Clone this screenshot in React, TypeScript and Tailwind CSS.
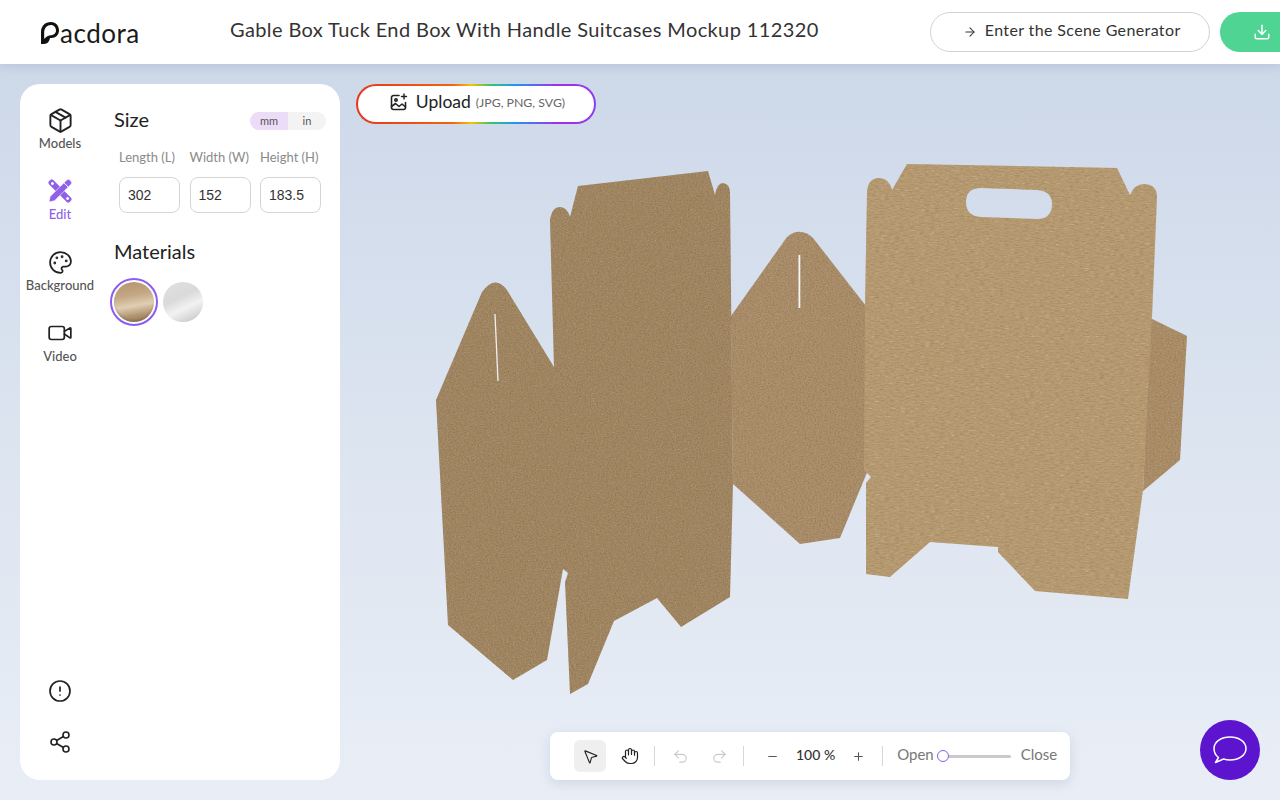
import {
  ArrowRight,
  CircleAlert,
  Download,
  Hand,
  MousePointer2,
  Minus,
  Package,
  Palette,
  Plus,
  Redo2,
  Share2,
  Undo2,
  Video,
} from 'lucide-react';

const uiFont = "font-['Lato',sans-serif]";

function EditIcon() {
  return (
    <svg width="24" height="24" viewBox="0 0 24 24" fill="#9061e8">
      {/* ruler, hollow ends */}
      <path
        fillRule="evenodd"
        d="M5.5 1.2L22.8 18.5a2.4 2.4 0 0 1 0 3.4l-.9.9a2.4 2.4 0 0 1-3.4 0L1.2 5.5a2.4 2.4 0 0 1 0-3.4l.9-.9a2.4 2.4 0 0 1 3.4 0ZM3.4 3.4a1.4 1.4 0 1 0 2 2 1.4 1.4 0 0 0-2-2ZM18.6 18.6a1.4 1.4 0 1 0 2 2 1.4 1.4 0 0 0-2-2Z"
      />
      {/* pencil */}
      <path d="M18.5 1.2a2.6 2.6 0 0 1 3.6 0l.7.7a2.6 2.6 0 0 1 0 3.6L6.5 21.8 1 23l1.2-5.5Z" stroke="#fff" strokeWidth="0.6" />
      <path d="M16 3.8l4.2 4.2" stroke="#fff" strokeWidth="1" />
    </svg>
  );
}

function UploadIcon() {
  return (
    <svg width="18" height="18" viewBox="0 0 18 18" fill="none" stroke="#222" strokeWidth="1.6" strokeLinecap="round" strokeLinejoin="round">
      <path d="M9 2.5H3.5a2 2 0 0 0-2 2v10a2 2 0 0 0 2 2h10a2 2 0 0 0 2-2V9.5" />
      <circle cx="6" cy="7" r="1.2" />
      <path d="M1.5 13.5l4-3 3.5 3 3-2.5 3.5 3" />
      <path d="M14 1v5M11.5 3.5h5" strokeWidth="1.4" />
    </svg>
  );
}

function NavItem({ icon, label, active }: { icon: React.ReactNode; label: string; active?: boolean }) {
  return (
    <div className="flex h-[71px] w-20 flex-col items-center pt-[24px]">
      <div className="flex h-6 items-center justify-center text-[#222]">{icon}</div>
      <span className={`mt-[4px] text-[13px] leading-[14px] font-medium ${active ? 'text-[#9061e8]' : 'text-[#555]'}`}>{label}</span>
    </div>
  );
}

function SizeField({ label, value }: { label: string; value: string }) {
  return (
    <div className="flex w-[61px] flex-col">
      <span className="text-[13px] leading-[16px] whitespace-nowrap text-[#8a8a8a]">{label}</span>
      <input
        readOnly
        value={value}
        className="mt-3 h-9 w-full rounded-lg border border-[#d5d5d5] bg-white pl-2 font-['Liberation_Sans',sans-serif] text-[14px] text-[#333] outline-none"
      />
    </div>
  );
}

function BoxNet() {
  return (
    <svg className="absolute inset-0 h-full w-full" viewBox="0 64 1280 736">
      <defs>
        <filter id="kraft" x="0" y="0" width="100%" height="100%" colorInterpolationFilters="sRGB">
          <feTurbulence type="fractalNoise" baseFrequency="0.6 0.75" numOctaves="3" seed="4" result="n" />
          <feColorMatrix in="n" type="matrix" values="0 0 0 0 0.4  0 0 0 0 0.3  0 0 0 0 0.2  0.7 0 0 0 -0.3" result="d" />
          <feColorMatrix in="n" type="matrix" values="0 0 0 0 0.85  0 0 0 0 0.76  0 0 0 0 0.62  0 0.9 0 0 -0.5" result="l" />
          <feMerge result="m">
            <feMergeNode in="d" />
            <feMergeNode in="l" />
          </feMerge>
          <feComposite in="m" in2="SourceGraphic" operator="in" result="mm" />
          <feMerge>
            <feMergeNode in="SourceGraphic" />
            <feMergeNode in="mm" />
          </feMerge>
        </filter>
        <filter id="kraftFibre" x="0" y="0" width="100%" height="100%" colorInterpolationFilters="sRGB">
          <feTurbulence type="fractalNoise" baseFrequency="0.2 0.85" numOctaves="3" seed="9" result="n" />
          <feColorMatrix in="n" type="matrix" values="0 0 0 0 0.45  0 0 0 0 0.34  0 0 0 0 0.2  0.6 0 0 0 -0.26" result="d" />
          <feColorMatrix in="n" type="matrix" values="0 0 0 0 0.88  0 0 0 0 0.84  0 0 0 0 0.74  0 1.2 0 0 -0.7" result="l" />
          <feMerge result="m">
            <feMergeNode in="d" />
            <feMergeNode in="l" />
          </feMerge>
          <feComposite in="m" in2="SourceGraphic" operator="in" result="mm" />
          <feMerge>
            <feMergeNode in="SourceGraphic" />
            <feMergeNode in="mm" />
          </feMerge>
        </filter>
      </defs>

      {/* side flap */}
      <path filter="url(#kraft)" fill="#ac8f69" d="M1150 318L1187 336L1180 460L1143 491Z" />

      {/* middle panel */}
      <path
        filter="url(#kraft)"
        fill="#ab8e6a"
        d="M731 316L787 237Q800 226 813 238L866 306L868 470L840 538L800 544L733 484Z"
      />
      <path fill="#f4f6fa" d="M798.5 255h1.8v53h-1.8z" />

      {/* tall dark panel */}
      <path
        filter="url(#kraft)"
        fill="#a28763"
        d="M436 400L482 292Q495 274 507 290L554 367L550 220Q552 207 560 207Q567 207 570 217L578 186L708 171L715 195Q717 183 723 183Q730 184 730 193L733 483L730 597L681 627L657 598L614 621L588 684L570 694L565 582L568 573L563 569L547 660L513 680L448 625Z"
      />
      <path fill="none" stroke="#eef0f2" strokeWidth="1.3" d="M495 314L498 381" />

      {/* front panel with handle */}
      <path
        filter="url(#kraftFibre)"
        fill="#b79b72"
        fillRule="evenodd"
        d="M867 192Q868 178 879 178Q889 178 892 190L907 164L1117 168L1130 195Q1134 184 1145 184Q1157 185 1157 197L1152 318L1143 490L1128 599L1035 591L998 552L998 547L930 542L890 577L866 574L866 483L871 477L864 470L865 305ZM981 188L1037 190Q1052 191 1052 204Q1052 219 1037 219L981 217Q966 216 966 202Q966 188 981 188Z"
      />
    </svg>
  );
}

export default function App() {
  return (
    <div className={`flex h-screen w-full flex-col overflow-hidden ${uiFont}`}>
      {/* Header */}
      <header className="z-10 flex h-16 shrink-0 items-center overflow-hidden bg-white pl-10 shadow-[0_2px_10px_rgba(90,110,150,0.18)]">
        <div className="flex w-[190px] shrink-0 items-end">
          <svg width="20" height="22" viewBox="0 0 18 22" fill="#111" fillRule="evenodd" className="-mt-1">
            <path d="M0 22V10C0 4 4 0 10 0C15 0 18 4 18 8.5C18 13 14.5 16 10.5 16H9C8.5 19 6.5 22 3 22ZM3.2 17C5 14.5 7.5 13.2 10.2 13.2C13 13.2 15 11 15 8.5C15 5.5 13 3 10 3C6 3 3.2 6 3.2 10.5Z" />
          </svg>
          <span className="-mb-[2px] text-[26px] leading-none tracking-[0.5px] text-[#1a1a1a]">acdora</span>
        </div>
        <h1 className="shrink-0 pb-[6px] text-[20px] font-normal tracking-[0.385px] whitespace-nowrap text-[#333]">
          Gable Box Tuck End Box With Handle Suitcases Mockup 112320
        </h1>
        <div className="ml-[111px] flex shrink-0 items-center gap-[10px]">
          <button className="flex h-10 w-[280px] items-center justify-center gap-2 rounded-full border border-[#d2d2d2] bg-white pb-1 pl-[4px] text-[16px] tracking-[0.38px] text-[#333]">
            <ArrowRight className="mt-1" size={14} strokeWidth={1.8} />
            Enter the Scene Generator
          </button>
          <button className="flex h-10 w-[180px] items-center gap-[10px] rounded-full bg-[#4fd494] pl-[33px] text-[16px] text-white">
            <Download size={18} strokeWidth={2} />
            Save
          </button>
        </div>
      </header>

      {/* Canvas */}
      <main className="relative flex min-h-0 flex-1 bg-gradient-to-b from-[#cdd8e9] via-[#dce4f0] to-[#e9eef6] p-5">
        <BoxNet />

        {/* Left panel */}
        <aside className="relative flex w-80 rounded-[20px] bg-white">
          <nav className="flex w-20 flex-col">
            <NavItem icon={<Package size={27} strokeWidth={1.7} />} label="Models" />
            <NavItem icon={<EditIcon />} label="Edit" active />
            <NavItem icon={<Palette size={25} strokeWidth={1.7} />} label="Background" />
            <NavItem icon={<Video size={26} strokeWidth={1.6} />} label="Video" />
            <div className="mt-auto flex flex-col items-center gap-[27px] pb-[26px] text-[#222]">
              <CircleAlert size={24} strokeWidth={1.7} />
              <Share2 size={24} strokeWidth={1.6} />
            </div>
          </nav>

          <section className="flex-1 pt-[23px] pl-[14px]">
            <div className="flex h-6 items-center justify-between pr-[14px]">
              <h2 className="text-[20px] leading-6 font-normal text-[#222]">Size</h2>
              <div className="mt-[3px] flex h-[18px] overflow-hidden rounded-full text-[11px] leading-[18px] text-[#555]">
                <span className="w-[38px] bg-[#ecdcf8] text-center">mm</span>
                <span className="w-[38px] bg-[#f3f3f3] text-center">in</span>
              </div>
            </div>
            <div className="mt-[18px] flex gap-[9.5px] pl-[5px]">
              <SizeField label="Length (L)" value="302" />
              <SizeField label="Width (W)" value="152" />
              <SizeField label="Height (H)" value="183.5" />
            </div>
            <h2 className="mt-[26px] text-[20px] leading-6 font-normal text-[#222]">Materials</h2>
            <div className="-ml-1 mt-[15px] flex items-center gap-[5px]">
              <div className="flex h-12 w-12 items-center justify-center rounded-full border-2 border-[#8b5cf0]">
                <div className="h-10 w-10 rounded-full bg-[radial-gradient(circle_at_50%_45%,rgba(0,0,0,0)_0%,rgba(0,0,0,0)_62%,rgba(70,55,40,0.7)_100%),linear-gradient(170deg,#b4946c_0%,#c4a884_35%,#e0cfb4_58%,#b0936f_80%,#8a7054_100%)]" />
              </div>
              <div className="h-10 w-10 rounded-full bg-[radial-gradient(circle_at_48%_45%,rgba(0,0,0,0)_0%,rgba(0,0,0,0)_68%,rgba(130,130,130,0.45)_100%),linear-gradient(155deg,#e0e0e0_0%,#dadada_40%,#f2f2f2_62%,#c6c6c6_95%)]" />
            </div>
          </section>
        </aside>

        {/* Upload */}
        <div className="absolute top-5 left-[356px] h-10 w-60 rounded-full bg-[linear-gradient(90deg,#e8361c_0%,#f0640f_40%,#f5c400_48%,#3cc46c_56%,#1e9be8_66%,#a030e8_84%,#8a3ff0_100%)] p-[2px]">
          <div className="flex h-full w-full items-center justify-center gap-2 rounded-full bg-white pb-1 pl-[3px]">
            <UploadIcon />
            <span className="text-[17.5px] text-[#222]">Upload</span>
            <span className="-ml-[3px] mt-[2px] text-[12.3px] text-[#666]">(JPG, PNG, SVG)</span>
          </div>
        </div>

        {/* Toolbar */}
        <div className="absolute bottom-5 left-[550px] flex h-12 w-[520px] items-center rounded-lg bg-white pl-6 shadow-[0_4px_12px_rgba(110,130,170,0.2)]">
          <div className="flex h-8 w-8 items-center justify-center rounded-md bg-[#efefef] text-[#222]">
            <MousePointer2 size={17} strokeWidth={1.6} />
          </div>
          <div className="ml-2 flex h-8 w-8 items-center justify-center text-[#222]">
            <Hand size={18} strokeWidth={1.6} />
          </div>
          <div className="mx-2 h-5 w-px bg-[#d8d8d8]" />
          <div className="flex items-center gap-[22px] pl-[9px] text-[#c9c9c9]">
            <Undo2 size={17} strokeWidth={1.6} />
            <Redo2 size={17} strokeWidth={1.6} />
          </div>
          <div className="ml-[15px] h-5 w-px bg-[#d8d8d8]" />
          <Minus className="ml-[22px] text-[#555]" size={13} strokeWidth={2} />
          <span className="ml-[17px] pb-[3px] text-[14px] font-medium text-[#333]">100 %</span>
          <Plus className="ml-[17px] text-[#555]" size={13} strokeWidth={2} />
          <div className="ml-[17px] h-5 w-px bg-[#d8d8d8]" />
          <span className="ml-[14px] pb-[3px] text-[15px] text-[#777]">Open</span>
          <div className="relative ml-[3px] h-[3px] w-[74px] rounded-full bg-[#c9c9c9]">
            <div className="absolute top-[-5px] left-0 h-3 w-3 rounded-full border border-[#8b5cf0] bg-white" />
          </div>
          <span className="ml-[10px] pb-[3px] text-[15px] text-[#777]">Close</span>
        </div>

        {/* Chat */}
        <button className="absolute right-5 bottom-5 flex h-[60px] w-[60px] items-center justify-center rounded-full bg-[#5c14cf]">
          <svg width="36" height="30" viewBox="0 0 36 30" fill="none" stroke="#fff" strokeWidth="1.5" strokeLinejoin="round">
            <path d="M18 2C26.5 2 34 6.5 34 13.5C34 20.5 26.5 25 18 25C15.5 25 13.5 24.6 11.5 24L3.5 27.5L6.5 22.5C3.5 20.3 2 17 2 13.5C2 6.5 9.5 2 18 2Z" />
          </svg>
        </button>
      </main>
    </div>
  );
}
